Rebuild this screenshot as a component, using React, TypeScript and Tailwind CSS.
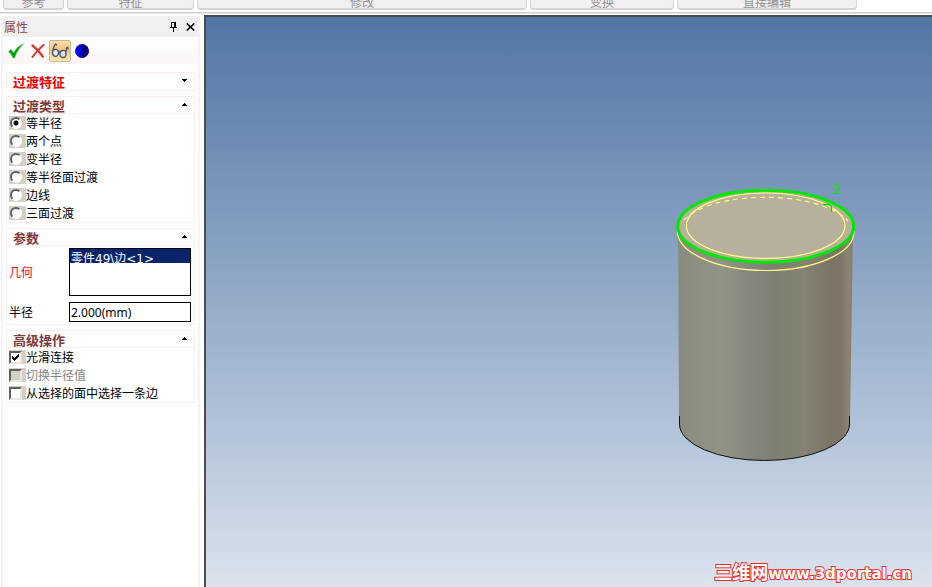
import { useState, type ReactNode } from 'react';

const GROUPS = [
    { label: '参考', width: 'w-[61px]' },
    { label: '特征', width: 'w-[127px]' },
    { label: '修改', width: 'w-[330px]' },
    { label: '变换', width: 'w-[144px]' },
    { label: '直接编辑', width: 'w-[180px]' },
];

const BLEND_TYPES = ['等半径', '两个点', '变半径', '等半径面过渡', '边线', '三面过渡'];

const OPTIONS = [
    { id: 'smooth', label: '光滑连接', checked: true, disabled: false },
    { id: 'swap', label: '切换半径值', checked: false, disabled: true },
    { id: 'pick', label: '从选择的面中选择一条边', checked: false, disabled: false },
];

function Ribbon() {
    return (
        <header className="flex h-[13px] shrink-0 items-start gap-[3px] overflow-hidden border-b border-[#cfcfcf] bg-white pl-[3px]">
            {GROUPS.map((group) => (
                <div
                    key={group.label}
                    className={`flex h-[10px] shrink-0 items-end justify-center overflow-hidden rounded-b-sm border border-t-0 border-b-2 border-[#d6d5d6] bg-[#f1eff0] text-[#929292] ${group.width}`}
                >
                    <span className="leading-3">{group.label}</span>
                </div>
            ))}
        </header>
    );
}

type SectionProps = { title: string; red?: boolean; defaultOpen?: boolean; children?: ReactNode };

function Section({ title, red, defaultOpen = true, children }: SectionProps) {
    const [open, setOpen] = useState(defaultOpen);

    return (
        <section className="border border-[#f8eeee]">
            <button
                type="button"
                aria-expanded={open}
                onClick={() => setOpen(!open)}
                className={`flex h-[17px] w-full items-center justify-between pr-[7px] pl-[6px] text-left ${open ? 'border-b border-[#f8eeee]' : ''}`}
            >
                <span className={`text-[13px] leading-[17px] font-bold ${red ? 'text-[#e80000]' : 'text-[#803838]'}`}>{title}</span>
                <svg width="5" height="3" viewBox="0 0 5 3" className="mb-[2px]" shapeRendering="crispEdges">
                    <path d={open ? 'M2 0h1v1h1v1h1v1H0V2h1V1h1z' : 'M0 0h5v1H4v1H3v1H2V2H1V1H0z'} />
                </svg>
            </button>
            {open && children}
        </section>
    );
}

function Toolbar() {
    return (
        <div className="flex h-[27px] items-center bg-linear-to-b from-white to-[#fbf5f5] pl-[2px]">
            <button type="button" aria-label="确定" className="flex size-[22px] items-center justify-center">
                <svg width="16" height="16" viewBox="0 0 16 16">
                    <path d="M0.500 8.500 3 6.500 5.800 9.800C8 5.500 11 2.500 15.500 1 11.500 4.500 8.700 9 6.500 15H5C4 12.500 2.500 10.300.5 8.500z" fill="#0aa00a" stroke="#3cb83c" strokeWidth=".5" />
                </svg>
            </button>
            <button type="button" aria-label="取消" className="flex size-[22px] items-center justify-center">
                <svg width="14" height="14" viewBox="0 0 14 14" fill="none" stroke="#cf3b36" strokeLinecap="round">
                    <path d="M12.500 1C8.500 4.500 4.500 8.500 1.500 13" strokeWidth="2" />
                    <path d="M1.500 1.500C5 4 9 8.500 11.800 12.500" strokeWidth="2.300" />
                </svg>
            </button>
            <button type="button" aria-label="预览" className="flex size-[22px] items-center justify-center rounded-xs border border-[#c9b98f] bg-linear-to-b from-[#fbdcae] via-[#fdc06c] to-[#fdeab4]">
                <svg width="18" height="16" viewBox="0 0 18 16" fill="none" stroke="#3f566e" strokeWidth="1.300">
                    <path d="M6 2.500C5 .5 3.500 1 3 4L1.500 8.500M16.800 6.500C17.500 4 16 3.500 15.400 5.500L15 9M7.500 9.500q1.200-1.500 2.300.5" />
                    <ellipse cx="4.500" cy="9.800" rx="3" ry="3.500" fill="#cfeaf8" />
                    <ellipse cx="12" cy="11" rx="3" ry="3.500" fill="#cfeaf8" />
                    <path d="M3.500 9.500l2-2M11.500 10.500l2-2" stroke="#fff" />
                </svg>
            </button>
            <button type="button" aria-label="着色" className="flex size-[22px] items-center justify-center">
                <svg width="14" height="14" viewBox="0 0 14 14">
                    <circle cx="7" cy="7" r="6.700" fill="#0000f0" />
                    <path d="M7 .3a6.700 6.700 0 0 1 0 13.400z" fill="#0a0078" />
                    <circle cx="7" cy="7" r="6.500" fill="none" stroke="#1c1c80" strokeWidth=".7" />
                </svg>
            </button>
        </div>
    );
}

function PropertyPanel() {
    return (
        <aside className="mt-[2px] mr-1 w-[199px] shrink-0 border-x-2 border-[#f5f3f3] bg-white">
            <div className="flex h-[21px] items-center justify-between bg-[#f1eff0] pr-[3px] pl-px">
                <h1 className="text-[#8a4a4a]">属性</h1>
                <div className="flex items-center gap-2">
                    <button type="button" aria-label="固定">
                        <svg width="9" height="10" viewBox="0 0 9 10" shapeRendering="crispEdges">
                            <path d="M2 0h5v5h1v1H5v4H4V6H1V5h1zM3 1v4h2V1z" fillRule="evenodd" />
                        </svg>
                    </button>
                    <button type="button" aria-label="关闭">
                        <svg width="9" height="8" viewBox="0 0 9 8" stroke="#000" strokeWidth="1.600">
                            <path d="M.7.5l7.600 7M8.300.5l-7.600 7" />
                        </svg>
                    </button>
                </div>
            </div>
            <Toolbar />

            <div className="mt-2 flex flex-col gap-[5px] px-[3px]">
                <Section title="过渡特征" red defaultOpen={false} />

                <Section title="过渡类型">
                    {BLEND_TYPES.map((type, i) => (
                        <label key={type} className="flex h-[18px] items-center pl-[2px]">
                            <span className="flex h-[14px] w-[17px] items-center bg-[#d4d0c8] pl-px">
                                <input
                                    type="radio"
                                    name="blend"
                                    defaultChecked={i === 0}
                                    className="size-3 appearance-none rounded-full border-2 border-t-[#606060] border-r-white border-b-white border-l-[#606060] bg-white checked:bg-[radial-gradient(circle,#000_2px,#fff_3px)]"
                                />
                            </span>
                            <span>{type}</span>
                        </label>
                    ))}
                </Section>

                {/* Selected edge and blend radius */}
                <Section title="参数">
                    <div className="flex flex-col gap-[6px] pt-[2px] pr-[3px] pb-[2px] pl-[2px]">
                        <div className="flex items-center">
                            <label htmlFor="geometry" className="w-[60px] text-[#f00]">几何</label>
                            <select
                                id="geometry"
                                multiple
                                defaultValue={['edge']}
                                className="h-12 min-w-0 flex-1 appearance-none overflow-hidden border border-black bg-white p-0 font-['DejaVu_Sans','Noto_Sans_CJK_SC',sans-serif] text-xs text-white"
                            >
                                <option value="edge" className="h-[14px] min-h-0 bg-[#0a246a] p-0 pl-px leading-[8px] text-white checked:bg-[linear-gradient(#0a246a,#0a246a)]">
                                    零件49\边&lt;1&gt;
                                </option>
                            </select>
                        </div>
                        <div className="flex items-center">
                            <label htmlFor="radius" className="w-[60px]">半径</label>
                            <input
                                id="radius"
                                type="text"
                                defaultValue="2.000(mm)"
                                className="h-5 min-w-0 flex-1 border border-black bg-white pl-px font-['Noto_Sans',sans-serif] text-xs"
                            />
                        </div>
                    </div>
                </Section>

                <Section title="高级操作">
                    {OPTIONS.map((option) => (
                        <label key={option.id} className="flex h-[18px] items-center pl-[2px]">
                            <span className="relative flex h-[14px] w-[17px] items-center bg-[#d4d0c8]">
                                <input
                                    type="checkbox"
                                    defaultChecked={option.checked}
                                    disabled={option.disabled}
                                    className="peer size-[13px] appearance-none border-2 border-t-[#606060] border-r-[#e8e6e0] border-b-[#e8e6e0] border-l-[#606060] bg-white disabled:bg-[#d4d0c8]"
                                />
                                <svg width="7" height="7" viewBox="0 0 7 7" className="pointer-events-none absolute left-[3px] hidden peer-checked:block" shapeRendering="crispEdges">
                                    <path d="M0 2h1v1h1v1h1V3h1V2h1V1h1V0h1v3H6v1H5v1H4v1H3v1H2V6H1V5H0z" />
                                </svg>
                            </span>
                            <span className={option.disabled ? 'text-[#848484]' : ''}>{option.label}</span>
                        </label>
                    ))}
                </Section>
            </div>
        </aside>
    );
}

function Cylinder() {
    return (
        <svg width="192" height="292" viewBox="670 176 192 292" fill="none" className="absolute top-[159px] left-[464px]">
            <defs>
                <linearGradient id="side" x1="678" x2="853" y1="0" y2="0" gradientUnits="userSpaceOnUse">
                    <stop offset="0" stopColor="#8a8b80" />
                    <stop offset=".25" stopColor="#939287" />
                    <stop offset=".45" stopColor="#82857d" />
                    <stop offset=".55" stopColor="#7d8071" />
                    <stop offset=".72" stopColor="#858373" />
                    <stop offset=".88" stopColor="#7c7466" />
                    <stop offset=".93" stopColor="#7d7567" />
                    <stop offset=".97" stopColor="#8d8470" />
                    <stop offset="1" stopColor="#857f70" />
                </linearGradient>
            </defs>
            <path d="M678 226L679 424A85.500 36.500 0 0 0 850 424L853 226z" fill="url(#side)" />
            <path d="M679.500 416V424A85 36.500 0 0 0 849.500 424V416" stroke="#111" />
            <ellipse cx="765.700" cy="226.300" rx="88" ry="36" fill="#b6b09d" />

            {/* Blend preview */}
            <g stroke="#ffff80" strokeWidth="1.200">
                <path d="M677.500 231C677 252 716 270.500 766 270.500S855 252 854 231" />
                <ellipse cx="765.700" cy="225.700" rx="79.300" ry="32.700" />
                <path d="M684 220C697 206 729 197.300 765.500 197.300S834 206 848 221" strokeDasharray="5 4" />
            </g>
            <ellipse cx="765.700" cy="226.300" rx="88" ry="36" stroke="#00e800" strokeWidth="3" />
            <path d="M823 204.500h6l2.500 2v5" stroke="#00d800" strokeWidth="1.300" />
            <text x="832" y="194" fill="#00e800" fontSize="15" fontFamily="Liberation Mono, monospace">2</text>
        </svg>
    );
}

export default function App() {
    return (
        <div className="flex h-screen flex-col overflow-hidden bg-white font-['Noto_Sans_CJK_SC',sans-serif] text-xs leading-[18px] text-black">
            <Ribbon />
            <div className="flex min-h-0 flex-1 border-t border-[#e4e4e4] pl-px">
                <PropertyPanel />
                <main className="relative mt-px flex min-w-0 flex-1 items-end justify-end overflow-hidden border-t-2 border-l-2 border-[#4c4c4c] bg-linear-to-b from-[#5276a4] to-[#dbe3ed] pr-5 pb-1">
                    <Cylinder />
                    <a
                        href="#"
                        className="font-['DejaVu_Sans','Noto_Sans_CJK_SC',sans-serif] text-[15px] leading-[18px] font-bold text-white [paint-order:stroke_fill] [-webkit-text-stroke:2px_#f02c2c]"
                    >
                        <span className="text-[18px]">三维网</span>www.3dportal.cn
                    </a>
                </main>
            </div>
        </div>
    );
}
